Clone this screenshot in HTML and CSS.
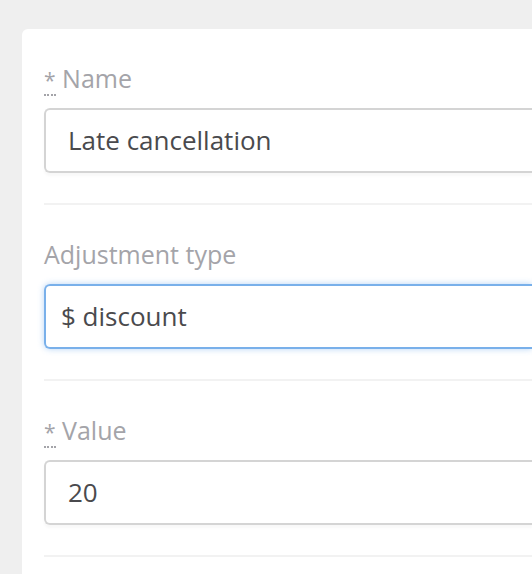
FILE: index.html
```html
<!DOCTYPE html>
<html lang="en">
<head>
  <meta charset="UTF-8" />
  <meta name="viewport" content="width=device-width, initial-scale=1.0"/>
  <title>Adjustment</title>
  <link rel="stylesheet" href="styles.css">
</head>
<body>
  <div class="card">
    <div class="field">
      <label class="field-label"><abbr title="required">*</abbr> Name</label>
      <div class="input">Late cancellation</div>
    </div>

    <div class="field">
      <label class="field-label">Adjustment type</label>
      <div class="input select focused">$ discount</div>
    </div>

    <div class="field">
      <label class="field-label"><abbr title="required">*</abbr> Value</label>
      <div class="input">20</div>
    </div>
  </div>
</body>
</html>
```

FILE: styles.css
```css
body {
  font-family: 'Open Sans', 'Liberation Sans', sans-serif;
  margin: 0;
  padding: 0;
  background: #efefef;
}

.card {
  background: white;
  margin: 29px 0 0 22px;
  padding-left: 22px;
  border-radius: 6px 0 0 0;
  height: 545px;
}

.field {
  padding: 34px 0 30px;
  border-bottom: 2px solid #f2f2f2;
}

.field-label {
  display: block;
  font-size: 25px;
  line-height: 30px;
  height: 30px;
  color: #a4a4a9;
  margin-bottom: 15px;
}

.field-label abbr {
  font-size: 21px;
  line-height: 20px;
  text-decoration: none;
  border-bottom: 2px dotted #a4a4a9;
}

.input {
  height: 61px;
  line-height: 61px;
  border: 2px solid #d4d4d4;
  border-right: none;
  border-radius: 6px 0 0 6px;
  padding-left: 22px;
  font-size: 26px;
  color: #4a4a4d;
  box-shadow: 0 3px 3px rgba(0, 0, 0, 0.03);
}

.input.select {
  padding-left: 15px;
}

.input.focused {
  border-color: #79b0ea;
  box-shadow: 0 0 6px rgba(90, 160, 235, 0.45);
}
```
